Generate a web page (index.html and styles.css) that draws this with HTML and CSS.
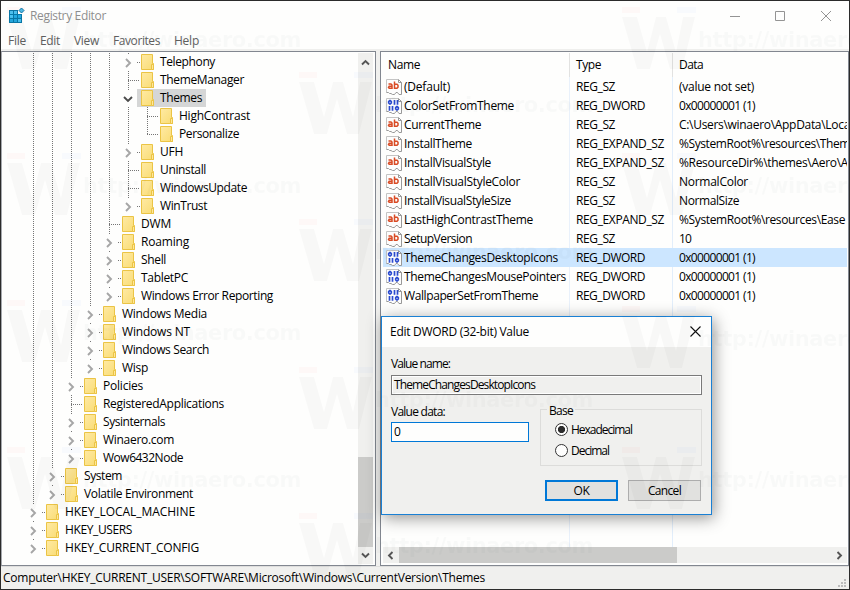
FILE: index.html
```
<!DOCTYPE html>
<html lang="en">
<head>
<meta charset="utf-8">
<title>Registry Editor</title>
<link rel="stylesheet" href="styles.css">
</head>
<body>
<svg class="defs" width="0" height="0">
  <defs>
    <linearGradient id="fold" x1="0" y1="0" x2="1" y2="1"><stop offset="0" stop-color="#ffeaa4"/><stop offset="1" stop-color="#f9dc74"/></linearGradient>
    <symbol id="folder" viewBox="0 0 14 16"><path d="M.5.5H11.500V9.500H12.500V15.500H.5Z" fill="url(#fold)" stroke="#ebc445"/><path d="M10.500 15V10.500H12.500V15.500H10.500" fill="#ffe79b" stroke="#ebc445"/></symbol>
    <symbol id="page" viewBox="0 0 16 16"><path d="M.5.500H12L15.500 4V15.500H13.500L12.500 14.500H10.500L9 15.500H7L5.500 14H3.500L2.500 13.500H.5Z" fill="#fdfdfd"/><path d="M.5 13.500V.5H12" fill="none" stroke="#c4c4c4"/><path d="M12.500.500V3.500H15.500V15.500H13L11.500 13.500H10L8.500 15.500H6.500L5 14.500H3.500L2.500 13.500H.5M12.500.5L15.500 3.500" fill="none" stroke="#999"/></symbol>
    <symbol id="string" viewBox="0 0 16 16"><use href="#page"/><path d="M2.500 5H5L6 6V10M6 9.300H3.200L2.500 8.500L3.200 7.300H6M8.500 2.500V10M8.500 5.200H11L12 6.200V8.300L11 9.300H8.500" fill="none" stroke="#d94b25" stroke-width="1.500"/></symbol>
    <symbol id="binary" viewBox="0 0 16 16"><use href="#page"/><path d="M3.700 2.700H4.300L5.300 3.700V5L4.300 6H3.700L2.700 5V3.700ZM8.500 2V6.700M11.500 2V6.700M3.500 8V12.700M6.500 8V12.700M10.700 8.700H11.300L12.300 9.700V11L11.300 12H10.700L9.700 11V9.700Z" fill="none" stroke="#2b4bd0" stroke-width="1.700"/></symbol>
    <symbol id="chev" viewBox="0 0 8 10"><path d="M2 1L6 5L2 9" fill="none" stroke="#a6a6a6" stroke-width="1.900"/></symbol>
    <symbol id="arrow" viewBox="0 0 9 7"><path d="M1 5.500L4.500 2L8 5.500" fill="none" stroke="#555" stroke-width="1.900"/></symbol>
  </defs>
</svg>
<div class="window">
  <header class="titlebar">
    <svg class="app" width="16" height="16" viewBox="0 0 16 16"><path d="M0 2H9V6H13V15H0Z" fill="#0878a8"/><path d="M1 3H4V6H1ZM5 3H8V6H5ZM1 7H4V10H1ZM9 11H12V14H9Z" fill="#49c2f1"/><path d="M5 7H8V10H5ZM9 7H12V10H9ZM1 11H4V14H1ZM5 11H8V14H5Z" fill="#23a9e1"/><path d="M12.500 0L15 2.500L12.500 5L10 2.500Z" fill="#4bbde9" stroke="#0878a8"/></svg>
    <span class="title" data-w="76">Registry Editor</span>
    <svg class="controls" width="102" height="12" viewBox="0 0 102 12"><path d="M0 6.500H10M45.500 1.500H54.500V10.500H45.500ZM91 1L101 11M101 1L91 11" fill="none" stroke="#949494"/></svg>
  </header>
  <nav class="menu"><span data-w="18">File</span><span data-w="20">Edit</span><span data-w="25">View</span><span data-w="47">Favorites</span><span data-w="25">Help</span></nav>
  <main class="panes">
    <section class="pane treepane">
      <div class="tree" id="tree"></div>
      <div class="vscroll"><svg width="9" height="7"><use href="#arrow"/></svg><i></i><svg class="down" width="9" height="7"><use href="#arrow"/></svg></div>
    </section>
    <section class="pane listpane">
      <div class="head"><span class="name"><b data-w="32">Name</b></span><span class="type"><b data-w="25">Type</b></span><span class="data"><b data-w="24">Data</b></span></div>
      <div class="list" id="list"></div>
      <div class="hscroll"><svg class="left" width="9" height="7"><use href="#arrow"/></svg><i></i><svg class="right" width="9" height="7"><use href="#arrow"/></svg></div>
    </section>
  </main>
  <footer class="status"><span data-w="482">Computer\HKEY_CURRENT_USER\SOFTWARE\Microsoft\Windows\CurrentVersion\Themes</span>
    <svg width="9" height="9" viewBox="0 0 9 9"><path d="M6 0H8V2H6ZM3 3H5V5H3ZM6 3H8V5H6ZM0 6H2V8H0ZM3 6H5V8H3ZM6 6H8V8H6Z" fill="#bcbcbc"/></svg>
  </footer>
</div>
<div class="dialog">
  <div class="dtitle"><span data-w="139">Edit DWORD (32-bit) Value</span><svg width="11" height="11" viewBox="0 0 11 11"><path d="M.5.5L10.500 10.500M10.500.5L.5 10.500" stroke="#111" stroke-width="1.100"/></svg></div>
  <div class="dbody">
    <div class="label"><span data-w="59">Value name:</span></div>
    <div class="field readonly"><span data-w="141">ThemeChangesDesktopIcons</span></div>
    <div class="cols">
      <div class="value"><div class="label"><span data-w="54">Value data:</span></div><div class="field active"><span data-w="6">0</span></div></div>
      <fieldset><legend><span data-w="24">Base</span></legend>
        <div class="radio"><i class="on"></i><span data-w="61">Hexadecimal</span></div>
        <div class="radio"><i></i><span data-w="38">Decimal</span></div>
      </fieldset>
    </div>
    <div class="buttons"><div class="btn default"><span data-w="16">OK</span></div><div class="btn"><span data-w="33">Cancel</span></div></div>
  </div>
</div>
<div class="marks" id="marks" aria-hidden="true"></div>
<script src="script.js"></script>
</body>
</html>
```
FILE: styles.css
```
* { box-sizing: border-box; }
body { margin: 0; width: 850px; height: 590px; overflow: hidden; font: 12px/18px "Open Sans", "Noto Sans", sans-serif; color: #000; white-space: nowrap; }
.defs { position: absolute; }
svg { display: block; flex: none; }
[data-w] { display: inline-block; font-weight: 400; }
.window { width: 850px; height: 590px; border: 1px solid #2b2b2b; display: flex; flex-direction: column; background: #fefefd; }
.titlebar { height: 30px; flex: none; display: flex; align-items: center; padding: 0 17px 0 8px; color: #8f8f8f; }
.titlebar .title { margin-left: 5px; }
.titlebar .controls { margin-left: auto; margin-top: -1px; }
.menu { height: 19px; flex: none; display: flex; gap: 14px; padding-left: 7px; color: #606060; border-bottom: 1px solid #efefed; }
.menu span { line-height: 20px; }
.panes { height: 516px; flex: none; display: flex; gap: 4px; background: #f0f0ee; padding-top: 1px; }
.pane { border: 1px solid #828790; background: #fefefd; display: flex; overflow: hidden; height: 515px; }
.treepane { width: 375px; border-left-color: #a5a8ad; padding-right: 2px; }
.tree { flex: 1; padding-top: 1px; }
.row { height: 18px; display: flex; padding-left: 22px; }
.guide { width: 19px; height: 18px; flex: none; background: repeating-linear-gradient(#757575 0 1px, transparent 1px 2px) 9px 0 / 1px 18px no-repeat; }
.joint { width: 22px; height: 18px; flex: none; display: flex; align-items: center; padding-left: 5px; background: repeating-linear-gradient(#757575 0 1px, transparent 1px 2px) 9px 0 / 1px 18px no-repeat, repeating-linear-gradient(90deg, #757575 0 1px, transparent 1px 2px) 9px 9px / 11px 1px no-repeat; }
.joint.end { background-size: 1px 10px, 11px 1px; }
.joint.parent { background: linear-gradient(#757575, #757575) 9px 0 / 1px 1px no-repeat, repeating-linear-gradient(90deg, #757575 0 1px, transparent 1px 2px) 18px 9px / 3px 1px no-repeat; }
.joint svg { margin-top: 2px; }
.joint .open { transform: rotate(90deg); filter: brightness(.45); }
.item { display: flex; align-items: center; height: 18px; }
.item svg { margin-right: 5px; }
.item span { line-height: 18px; height: 18px; }
.selected .item { background: #d5d6d6; margin-left: -4px; padding: 0 4px; }
.vscroll { width: 15px; height: 511px; margin-top: 1px; background: #f0f0ee; display: flex; flex-direction: column; align-items: center; padding-top: 6px; }
.vscroll i { width: 15px; height: 90px; margin-top: 391px; background: #cbcbc9; }
.down { transform: rotate(180deg); margin-top: 5px; }
.listpane { width: 469px; flex-direction: column; }
.head, .line { display: flex; padding-left: 2px; margin-right: 1px; }
.head { height: 25px; line-height: 25px; background: linear-gradient(#e2e2e1, #e2e2e1) 188px 1px / 1px 24px no-repeat, linear-gradient(#e2e2e1, #e2e2e1) 291px 1px / 1px 24px no-repeat; }
.head .name { padding-left: 5px; }
.name { width: 187px; display: flex; align-items: center; padding-left: 3px; flex: none; }
.name svg { margin-right: 2px; }
.type { width: 103px; padding-left: 6px; flex: none; }
.data { width: 174px; padding-left: 6px; overflow: hidden; flex: none; }
.list { height: 470px; background: linear-gradient(#e9f1fb, #e9f1fb) 188px 0 / 1px 470px no-repeat, linear-gradient(#e2eefb, #e2eefb) 291px 0 / 1px 470px no-repeat; }
.line { height: 19px; line-height: 19px; }
.line > span { height: 19px; }
.line.selected { background: #cce6ff; margin-left: 2px; padding-left: 0; }
.hscroll { height: 16px; margin: 0 1px 2px 2px; background: #f0f0ee; display: flex; align-items: center; padding-left: 3px; }
.hscroll i { width: 278px; height: 16px; margin-left: 4px; background: #cbcbc9; }
.left { transform: rotate(-90deg); }
.right { transform: rotate(90deg); margin: 0 3px 0 auto; }
.status { height: 23px; flex: none; background: #f0f0ee; border-top: 1px solid #dededd; padding-left: 2px; display: flex; line-height: 22px; }
.status svg { margin: 12px 2px 0 auto; }
.dialog { position: absolute; left: 381px; top: 316px; width: 331px; height: 199px; border: 1px solid #1a80d4; background: #f0f0ee; box-shadow: 2px 3px 15px rgba(0,0,0,.42); }
.dtitle { height: 30px; background: #fefefd; display: flex; align-items: center; justify-content: space-between; padding: 0 10px 0 8px; }
.dtitle svg { margin-bottom: 2px; }
.dbody { padding: 8px 9px 0; }
.label { height: 20px; line-height: 18px; }
.field { height: 20px; border: 1px solid #7a7a7a; padding-left: 2px; line-height: 18px; width: 311px; }
.readonly { box-shadow: inset 0 0 0 1px #fff; }
.active { width: 138px; border-color: #0078d7; background: #fefefd; }
.cols { display: flex; justify-content: space-between; padding-top: 7px; height: 78px; }
.value .label { line-height: 19px; }
fieldset { width: 162px; height: 65px; margin: -1px 0 0; padding: 1px 0 0 14px; border: 1px solid #dcdcda; }
legend { height: 17px; line-height: 19px; margin-left: -8px; padding: 0 2px; }
.radio { height: 21px; display: flex; align-items: center; gap: 3px; }
.radio i { width: 13px; height: 13px; border: 1px solid #333; border-radius: 50%; background: #fefefd; }
.radio .on { background: radial-gradient(circle, #2c2c2c 0 3.200px, #fefefd 4px); }
.buttons { display: flex; justify-content: flex-end; gap: 10px; padding: 7px 1px 0 0; }
.btn { width: 73px; height: 21px; border: 1px solid #adadad; background: #e1e1df; text-align: center; line-height: 19px; }
.default { border: 2px solid #0078d7; line-height: 17px; }
.marks { position: absolute; inset: 0; overflow: hidden; pointer-events: none; opacity: .02; }
.mark { position: absolute; width: 300px; height: 66px; color: #203030; display: grid; grid-template-columns: 76px 224px; font: bold 21px/66px "DejaVu Sans", sans-serif; }
.mark svg { width: 74px; height: 66px; }
.mark span { font-weight: bold; justify-self: start; }
```
FILE: script.js
```
// [depth, label, text width, kind] - kind: c = collapsed, o = open, e = last child, '' = leaf
const keys = [
  [5, 'Telephony', 55, 'c'], [5, 'ThemeManager', 84, ''], [5, 'Themes', 42, 'o'],
  [6, 'HighContrast', 71, ''], [6, 'Personalize', 60, 'e'], [5, 'UFH', 23, 'c'],
  [5, 'Uninstall', 46, ''], [5, 'WindowsUpdate', 87, ''], [5, 'WinTrust', 47, 'c'],
  [4, 'DWM', 30, ''], [4, 'Roaming', 48, 'c'], [4, 'Shell', 25, 'c'], [4, 'TabletPC', 47, 'c'],
  [4, 'Windows Error Reporting', 132, 'c'], [3, 'Windows Media', 85, 'c'], [3, 'Windows NT', 68, 'c'],
  [3, 'Windows Search', 87, 'c'], [3, 'Wisp', 26, 'c'], [2, 'Policies', 40, 'c'],
  [2, 'RegisteredApplications', 121, ''], [2, 'Sysinternals', 62, 'c'], [2, 'Winaero.com', 71, 'c'],
  [2, 'Wow6432Node', 80, 'c'], [1, 'System', 38, 'c'], [1, 'Volatile Environment', 109, 'c'],
  [0, 'HKEY_LOCAL_MACHINE', 130, 'c'], [0, 'HKEY_USERS', 67, 'c'], [0, 'HKEY_CURRENT_CONFIG', 134, 'c']
];
const chevron = kind => `<svg class="${kind === 'o' ? 'open' : ''}" width="8" height="10"><use href="#chev"/></svg>`;
document.getElementById('tree').innerHTML = keys.map(([depth, label, w, kind]) => {
  const parent = kind === 'c' || kind === 'o';
  return `<div class="row${kind === 'o' ? ' selected' : ''}">` +
    '<div class="guide"></div>'.repeat(depth) +
    `<div class="joint${parent ? ' parent' : kind === 'e' ? ' end' : ''}">${parent ? chevron(kind) : ''}</div>` +
    `<div class="item"><svg width="14" height="16"><use href="#folder"/></svg><span data-w="${w}">${label}</span></div></div>`;
}).join('');

const types = { REG_SZ: 39, REG_DWORD: 69, REG_EXPAND_SZ: 88 };
const values = [
  ['(Default)', 46, 'REG_SZ', '(value not set)', 75],
  ['ColorSetFromTheme', 110, 'REG_DWORD', '0x00000001 (1)', 76],
  ['CurrentTheme', 77, 'REG_SZ', 'C:\\Users\\winaero\\AppData\\Loca', 171],
  ['InstallTheme', 68, 'REG_EXPAND_SZ', '%SystemRoot%\\resources\\Them', 171],
  ['InstallVisualStyle', 87, 'REG_EXPAND_SZ', '%ResourceDir%\\themes\\Aero\\A', 169],
  ['InstallVisualStyleColor', 116, 'REG_SZ', 'NormalColor', 69],
  ['InstallVisualStyleSize', 107, 'REG_SZ', 'NormalSize', 60],
  ['LastHighContrastTheme', 129, 'REG_EXPAND_SZ', '%SystemRoot%\\resources\\Ease', 166],
  ['SetupVersion', 68, 'REG_SZ', '10', 12],
  ['ThemeChangesDesktopIcons', 154, 'REG_DWORD', '0x00000001 (1)', 76],
  ['ThemeChangesMousePointers', 162, 'REG_DWORD', '0x00000001 (1)', 76],
  ['WallpaperSetFromTheme', 134, 'REG_DWORD', '0x00000001 (1)', 76]
];
document.getElementById('list').innerHTML = values.map(([name, w, type, data, dw], i) =>
  `<div class="line${i === 9 ? ' selected' : ''}"><span class="name"><svg width="16" height="16"><use href="#${type === 'REG_DWORD' ? 'binary' : 'string'}"/></svg><b data-w="${w}">${name}</b></span>` +
  `<span class="type"><b data-w="${types[type]}">${type}</b></span><span class="data"><b data-w="${dw}">${data}</b></span></div>`).join('');

// Background stamps in three staggered columns
const stamps = [[7, [7, 153, 300, 447]], [299, [72, 219, 367, 513]], [622, [7, 153, 306, 447]]];
document.getElementById('marks').innerHTML = stamps.flatMap(([x, ys]) => ys.map(y =>
  `<div class="mark" style="left:${x}px;top:${y}px"><svg viewBox="0 0 74 66"><path d="M0 0H18V6H0Z" fill="#f00"/><path d="M55 0H74V6H55Z" fill="#06f"/><path d="M0 10H15L25 45L34 10H44L54 45L61 10H73L60 62H48L38 27L28 62H15Z"/></svg><span data-w="218">http://winaero.com</span></div>`)).join('');

document.querySelectorAll('[data-w]').forEach(el => {
  const natural = el.getBoundingClientRect().width;
  const gap = (Number(el.dataset.w) - natural) / el.textContent.length;
  el.style.letterSpacing = gap.toFixed(3) + 'px';
});
```
